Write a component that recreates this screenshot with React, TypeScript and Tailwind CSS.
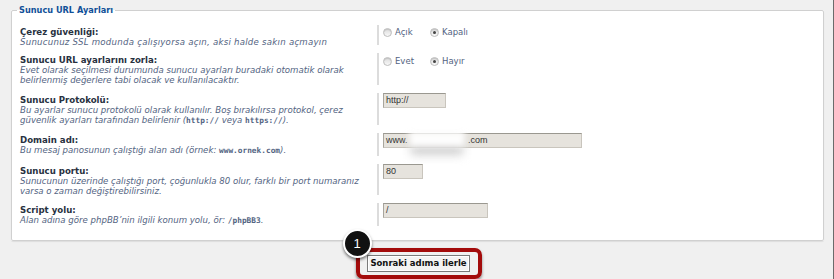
import React from "react";

const labelCls = "block font-bold text-[8.6px] leading-[10px] text-[#28313f]";
const descCls = "block italic text-[8.6px] leading-[10px] text-[#536482]";

function Radio({ checked, label, w }: { checked: boolean; label: string; w: string }) {
  return (
    <span className={`flex items-center ${w}`}>
      <span className="w-[9px] h-[9px] rounded-full border border-[#bdbdbd] bg-gradient-to-b from-[#dcdcdc] to-[#f8f8f8] flex items-center justify-center shadow-[inset_0_1px_1px_rgba(0,0,0,0.12)]">
        {checked && <span className="w-[3px] h-[3px] rounded-full bg-[#444]" />}
      </span>
      <span className="ml-[3px] text-[8.5px] leading-[10px] text-[#536482]">{label}</span>
    </span>
  );
}

function Input({ value, w, children }: { value?: string; w: string; children?: React.ReactNode }) {
  return (
    <div
      className={`relative ${w} h-[15px] bg-[#e6e3dd] border border-[#c9c5bd] border-t-[#9a9890] border-l-[#a8a59d] pl-[2px] text-[9px] leading-[13px] text-[#333] overflow-hidden`}
      style={{ fontFamily: "'Liberation Sans', Arial, sans-serif" }}
    >
      {value}
      {children}
    </div>
  );
}

function Row({
  h,
  label,
  desc,
  descExtra,
  children,
}: {
  h: string;
  label: string;
  desc: React.ReactNode;
  descExtra?: string;
  children: React.ReactNode;
}) {
  return (
    <div className={`flex ${h} mb-[8px]`}>
      <div className="w-[365px] pl-[8px] pt-[2px] shrink-0 whitespace-nowrap">
        <span className={labelCls}>{label}</span>
        <span className={`${descCls} ${descExtra ?? ""}`}>{desc}</span>
      </div>
      <div className="w-[2px] h-full bg-[#dcdcdc] shrink-0" />
      <div className="pl-[2px]">{children}</div>
    </div>
  );
}

const mono = "not-italic font-bold text-[7.8px] text-[#536482]";
const monoFont = { fontFamily: "'DejaVu Sans Mono', monospace" };

export default function App() {
  return (
    <div
      className="w-[834px] h-[279px] bg-[#f0f0f0] border-r border-[#6b6b6b] overflow-hidden"
      style={{ fontFamily: "'DejaVu Sans', Verdana, sans-serif" }}
    >
      <fieldset className="ml-[11px] mt-[4px] w-[813px] h-[237px] bg-white border border-[#d0d0d0] rounded-[2px] p-0 shadow-[0_1px_1px_rgba(0,0,0,0.08)]">
        <legend className="ml-[5px] px-[2px] font-bold text-[8.2px] leading-[12px] text-[#115098]">
          Sunucu URL Ayarları
        </legend>
        <div className="pt-[9px]">
          <Row
            h="h-[20px]"
            label="Çerez güvenliği:"
            desc="Sunucunuz SSL modunda çalışıyorsa açın, aksi halde sakın açmayın"
            descExtra="tracking-[0.25px]"
          >
            <div className="flex pt-[2px] pl-[2px]">
              <Radio checked={false} label="Açık" w="w-[47px]" />
              <Radio checked label="Kapalı" w="w-[60px]" />
            </div>
          </Row>
          <Row
            h="h-[32px]"
            label="Sunucu URL ayarlarını zorla:"
            desc={
              <>
                Evet olarak seçilmesi durumunda sunucu ayarları buradaki otomatik olarak
                <br />
                belirlenmiş değerlere tabi olacak ve kullanılacaktır.
              </>
            }
          >
            <div className="flex pt-[3px] pl-[2px]">
              <Radio checked={false} label="Evet" w="w-[47px]" />
              <Radio checked label="Hayır" w="w-[60px]" />
            </div>
          </Row>
          <Row
            h="h-[32px]"
            label="Sunucu Protokolü:"
            desc={
              <>
                Bu ayarlar sunucu protokolü olarak kullanılır. Boş bırakılırsa protokol, çerez
                <br />
                güvenlik ayarları tarafından belirlenir (<span className={mono} style={monoFont}>http://</span> veya{" "}
                <span className={mono} style={monoFont}>https://</span>).
              </>
            }
          >
            <div className="pl-[2px]">
              <Input value="http://" w="w-[63px]" />
            </div>
          </Row>
          <Row
            h="h-[23px]"
            label="Domain adı:"
            desc={
              <>
                Bu mesaj panosunun çalıştığı alan adı (örnek:{" "}
                <span className={mono} style={monoFont}>www.ornek.com</span>).
              </>
            }
          >
            <div className="pl-[2px] relative">
              <Input value="www." w="w-[199px]">
                <span className="absolute left-[84px] top-0">.com</span>
              </Input>
              <div className="absolute left-[30px] top-[5px] w-[52px] h-[17px] bg-[#bdbdbd]/70 blur-[5px]" />
              <div className="absolute left-[28px] top-[-2px] w-[56px] h-[16px] bg-white/95 blur-[3px]" />
            </div>
          </Row>
          <Row
            h="h-[31px]"
            label="Sunucu portu:"
            desc={
              <>
                Sunucunun üzerinde çalıştığı port, çoğunlukla 80 olur, farklı bir port numaranız
                <br />
                varsa o zaman değiştirebilirsiniz.
              </>
            }
          >
            <div className="pl-[2px]">
              <Input value="80" w="w-[40px]" />
            </div>
          </Row>
          <Row
            h="h-[23px]"
            label="Script yolu:"
            desc={
              <>
                Alan adına göre phpBB’nin ilgili konum yolu, ör:{" "}
                <span className={mono} style={monoFont}>/phpBB3</span>.
              </>
            }
          >
            <div className="pl-[2px]">
              <Input value="/" w="w-[105px]" />
            </div>
          </Row>
        </div>
      </fieldset>
      <div className="flex justify-center pl-[4px] mt-[7px]">
        <div className="relative w-[126px] h-[31px] border-[4px] border-[#a30b0b] rounded-[7px] shadow-[0_2px_3px_rgba(0,0,0,0.45)] flex items-center justify-center">
          <div className="h-[17px] px-[2px] bg-[#f3f3f3] border border-[#7a7a7a] shadow-[inset_0_0_0_1px_#fff] flex items-center text-[8.5px] font-bold text-[#111]">
            Sonraki adıma ilerle
          </div>
          <div className="absolute left-[-17px] top-[-23px] w-[29px] h-[29px] rounded-full bg-[#111] border-[2px] border-white shadow-[0_2px_3px_rgba(0,0,0,0.5)] flex items-center justify-center text-white text-[13px] leading-none" style={{ fontFamily: "'Liberation Sans', Arial, sans-serif" }}>
            1
          </div>
        </div>
      </div>
    </div>
  );
}
